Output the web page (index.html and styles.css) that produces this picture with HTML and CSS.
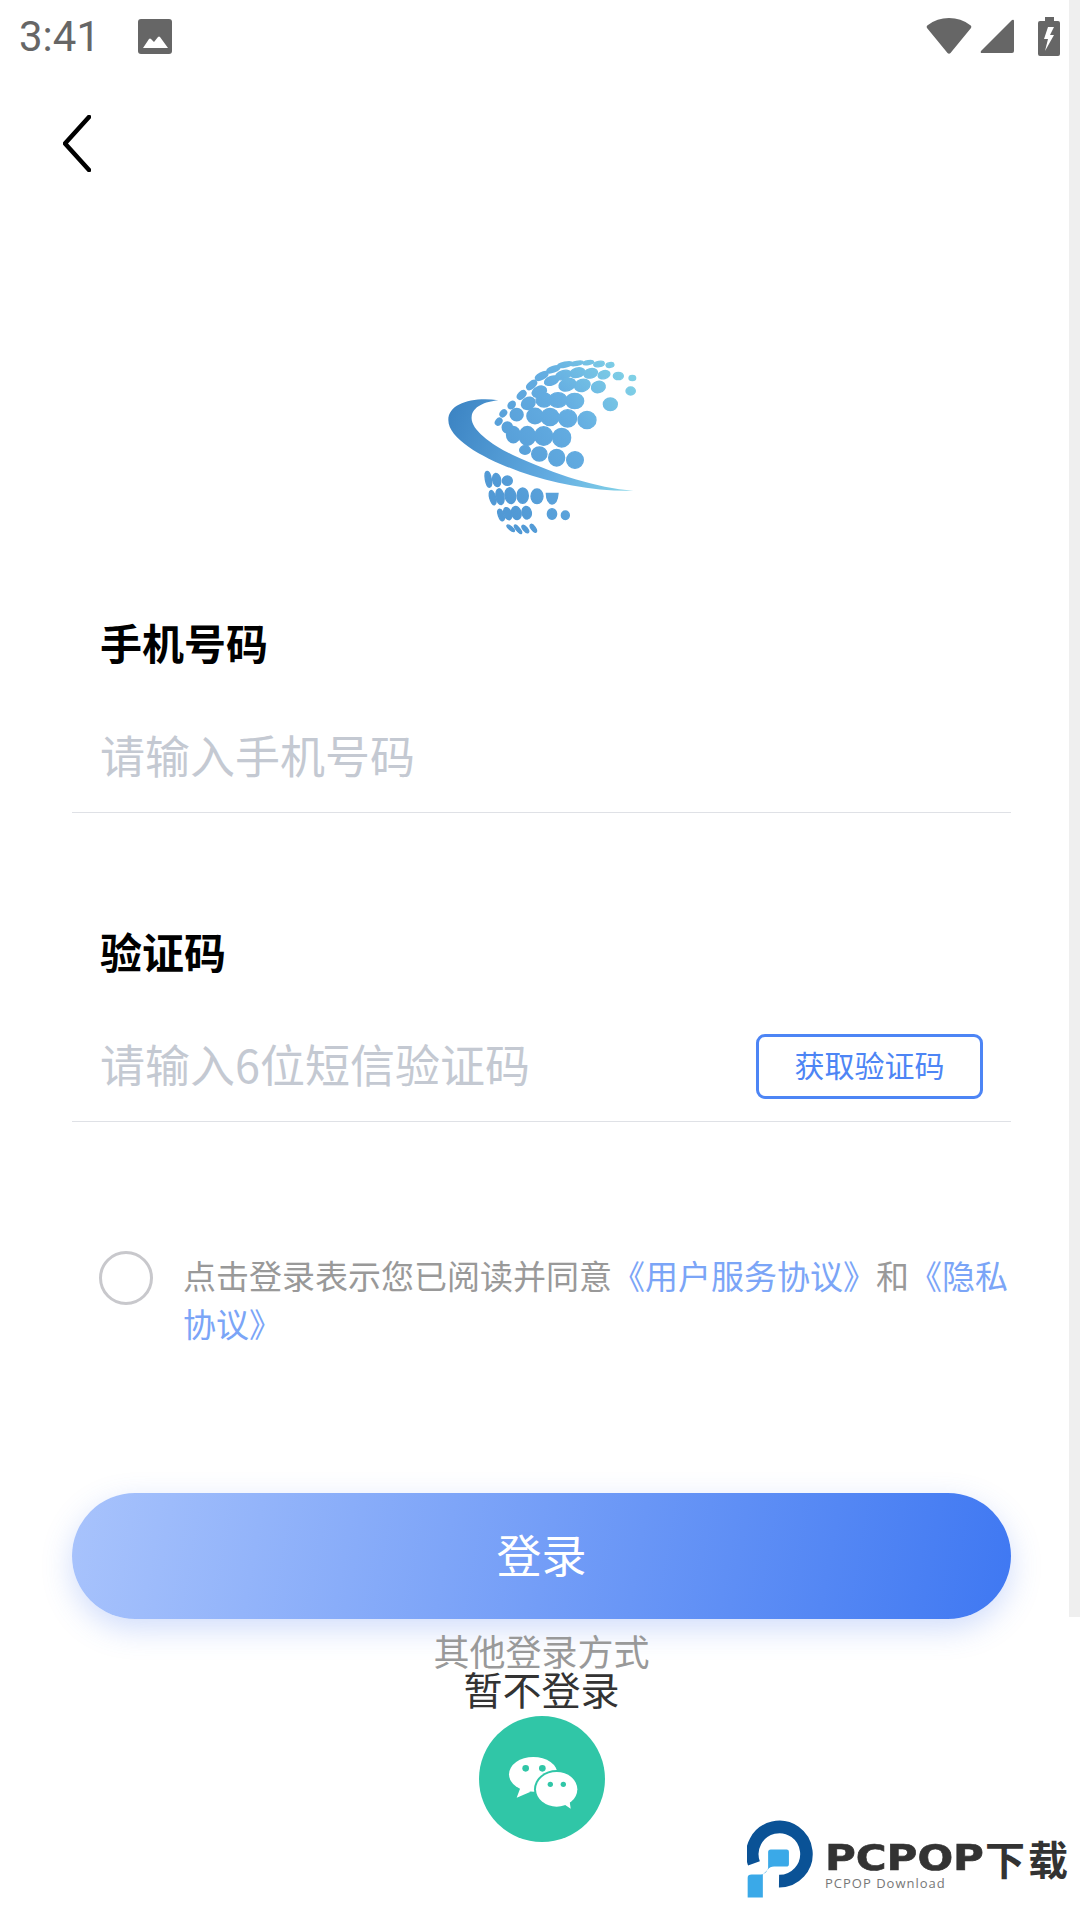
FILE: index.html
```html
<!DOCTYPE html>
<html lang="zh-CN">
  <head>
    <meta charset="UTF-8" />
    <meta name="viewport" content="width=device-width, initial-scale=1.0" />
    <title>登录</title>
    <link rel="stylesheet" href="styles.css">
  </head>
  <body>
    <div class="page">
      <header class="status-bar">
        <div class="status-left">
          <span class="time">3:41</span>
          <svg class="icon-image" viewBox="0 0 34 35">
            <rect width="34" height="35" rx="3" fill="#666" />
            <path d="M5 29 L11 20 Q12 19 13 20 L16 23 L20 18 Q21 17 22 18 L30 29 Z" fill="#fff" />
          </svg>
        </div>
        <div class="status-right">
          <svg class="icon-wifi" viewBox="0 0 46 36">
            <path d="M21.5 35 L1 10 Q0 8 2 7 Q11 0 23 0 Q35 0 44 7 Q46 8 45 10 L24.5 35 Q23 36.5 21.5 35 Z" fill="#666" />
          </svg>
          <svg class="icon-signal" viewBox="0 0 34 34">
            <path d="M32 1 Q34 0 34 2 V32 Q34 34 32 34 H2 Q0 34 1 32 Z" fill="#666" />
          </svg>
          <svg class="icon-battery" viewBox="0 0 22 39">
            <path d="M7 0 H16 V4 H20 Q22 4 22 6 V37 Q22 39 20 39 H2 Q0 39 0 37 V6 Q0 4 2 4 H7 Z" fill="#666" />
            <path d="M10 10 L6 22 H10 L7 34 L16 18 H12 L16 10 Z" fill="#fff" />
          </svg>
        </div>
      </header>

      <nav class="nav">
        <svg class="icon-back" viewBox="0 0 28 57">
          <path d="M26 2 L2 28.5 L26 55" fill="none" stroke="#000" stroke-width="4.5" stroke-linecap="round" stroke-linejoin="round" />
        </svg>
      </nav>

      <div class="logo">
        <svg viewBox="0 0 720 600" width="240" height="200">
          <defs>
            <linearGradient id="dots" gradientUnits="userSpaceOnUse" x1="200" y1="400" x2="640" y2="120">
              <stop offset="0" stop-color="#5199d5" />
              <stop offset="0.6" stop-color="#65aee2" />
              <stop offset="1" stop-color="#7fd0e6" />
            </linearGradient>
            <linearGradient id="swoosh" gradientUnits="userSpaceOnUse" x1="85" y1="240" x2="640" y2="452">
              <stop offset="0" stop-color="#3d85c4" />
              <stop offset="0.6" stop-color="#64ade2" />
              <stop offset="1" stop-color="#86d6e8" />
            </linearGradient>
          </defs>
          <!-- 左上的点更密 -->
          <g fill="url(#dots)" stroke="url(#dots)" stroke-width="9">
            <ellipse cx="435" cy="74" rx="20" ry="5" transform="rotate(-12 435 74)" />
            <ellipse cx="400" cy="88" rx="18" ry="6" transform="rotate(-20 400 88)" />
            <ellipse cx="365" cy="108" rx="18" ry="7" transform="rotate(-28 365 108)" />
            <ellipse cx="335" cy="135" rx="15" ry="7" transform="rotate(-40 335 135)" />
            <ellipse cx="305" cy="165" rx="13" ry="7" transform="rotate(-45 305 165)" />
            <ellipse cx="275" cy="195" rx="10" ry="7" transform="rotate(-50 275 195)" />
            <ellipse cx="250" cy="220" rx="9" ry="6" transform="rotate(-50 250 220)" />
            <ellipse cx="236" cy="245" rx="9" ry="6" transform="rotate(-50 236 245)" />
            <ellipse cx="395" cy="122" rx="20" ry="10" transform="rotate(-20 395 122)" />
            <ellipse cx="358" cy="155" rx="20" ry="13" transform="rotate(-25 358 155)" />
            <ellipse cx="325" cy="190" rx="19" ry="15" transform="rotate(-30 325 190)" />
            <ellipse cx="290" cy="224" rx="17" ry="16" />
            <ellipse cx="262" cy="262" rx="13" ry="14" />
            <ellipse cx="345" cy="228" rx="22" ry="21" />
            <ellipse cx="280" cy="284" rx="18" ry="22" />
            <ellipse cx="322" cy="288" rx="22" ry="26" />
          </g>
          <g fill="url(#dots)" stroke="url(#dots)" stroke-width="4">
            <ellipse cx="570" cy="75" rx="12" ry="7" transform="rotate(-10 570 75)" />
            <ellipse cx="537" cy="72" rx="16" ry="8" transform="rotate(-10 537 72)" />
            <ellipse cx="505" cy="68" rx="16" ry="6" transform="rotate(-10 505 68)" />
            <ellipse cx="470" cy="70" rx="20" ry="6" transform="rotate(-10 470 70)" />
            <ellipse cx="595" cy="108" rx="15" ry="11" />
            <ellipse cx="637" cy="114" rx="10" ry="8" />
            <ellipse cx="632" cy="153" rx="14" ry="12" />
            <ellipse cx="552" cy="104" rx="18" ry="12" transform="rotate(-15 552 104)" />
            <ellipse cx="512" cy="100" rx="21" ry="14" transform="rotate(-15 512 100)" />
            <ellipse cx="472" cy="98" rx="23" ry="14" transform="rotate(-15 472 98)" />
            <ellipse cx="430" cy="105" rx="24" ry="13" transform="rotate(-18 430 105)" />
            <ellipse cx="535" cy="141" rx="21" ry="17" transform="rotate(-15 535 141)" />
            <ellipse cx="487" cy="136" rx="24" ry="18" transform="rotate(-18 487 136)" />
            <ellipse cx="442" cy="134" rx="26" ry="18" transform="rotate(-20 442 134)" />
            <ellipse cx="571" cy="193" rx="21" ry="19" />
            <ellipse cx="464" cy="183" rx="27" ry="23" />
            <ellipse cx="414" cy="180" rx="27" ry="22" />
            <ellipse cx="372" cy="180" rx="24" ry="21" />
            <ellipse cx="501" cy="240" rx="27" ry="26" />
            <ellipse cx="443" cy="235" rx="27" ry="26" />
            <ellipse cx="390" cy="231" rx="27" ry="26" />
            <ellipse cx="425" cy="293" rx="27" ry="28" />
            <ellipse cx="371" cy="288" rx="27" ry="28" />
            <ellipse cx="465" cy="360" rx="25" ry="25" />
            <ellipse cx="410" cy="353" rx="24" ry="25" />
            <ellipse cx="358" cy="342" rx="23" ry="21" />
            <ellipse cx="315" cy="330" rx="16" ry="13" />
            <ellipse cx="205" cy="418" rx="9" ry="24" transform="rotate(-10 205 418)" />
            <ellipse cx="230" cy="420" rx="12" ry="20" transform="rotate(-10 230 420)" />
            <ellipse cx="262" cy="422" rx="15" ry="14" />
            <ellipse cx="218" cy="473" rx="9" ry="22" transform="rotate(-15 218 473)" />
            <ellipse cx="240" cy="470" rx="12" ry="24" transform="rotate(-10 240 470)" />
            <ellipse cx="271" cy="467" rx="16" ry="24" transform="rotate(-10 271 467)" />
            <ellipse cx="308" cy="467" rx="17" ry="23" />
            <ellipse cx="351" cy="469" rx="18" ry="22" />
            <path d="M379 460 H414 Q412 490 396 492 Q380 490 379 460 Z" />
            <ellipse cx="243" cy="525" rx="8" ry="18" transform="rotate(-20 243 525)" />
            <ellipse cx="263" cy="521" rx="11" ry="19" transform="rotate(-20 263 521)" />
            <ellipse cx="289" cy="519" rx="14" ry="20" transform="rotate(-15 289 519)" />
            <ellipse cx="320" cy="518" rx="14" ry="19" transform="rotate(-10 320 518)" />
            <ellipse cx="396" cy="522" rx="14" ry="16" />
            <ellipse cx="436" cy="526" rx="12" ry="13" />
            <ellipse cx="272" cy="565" rx="14" ry="5" transform="rotate(40 272 565)" />
            <ellipse cx="294" cy="568" rx="16" ry="5" transform="rotate(50 294 568)" />
            <ellipse cx="316" cy="567" rx="14" ry="6" transform="rotate(50 316 567)" />
            <ellipse cx="340" cy="565" rx="14" ry="6" transform="rotate(55 340 565)" />
          </g>
          <path d="M235 181 C160 170 85 190 85 240 C85 300 200 360 300 395 C400 430 530 455 640 452 C530 445 400 400 300 355 C220 320 150 270 155 230 C158 200 195 185 235 181 Z" fill="#fff" stroke="#fff" stroke-width="12" />
          <path d="M235 181 C160 170 85 190 85 240 C85 300 200 360 300 395 C400 430 530 455 640 452 C530 445 400 400 300 355 C220 320 150 270 155 230 C158 200 195 185 235 181 Z" fill="url(#swoosh)" />
        </svg>
      </div>

      <main class="form">
        <section class="field">
          <h2 class="field-label">手机号码</h2>
          <div class="field-row">
            <span class="placeholder">请输入手机号码</span>
          </div>
        </section>

        <section class="field field-code">
          <h2 class="field-label">验证码</h2>
          <div class="field-row">
            <span class="placeholder">请输入6位短信验证码</span>
            <button class="code-btn">获取验证码</button>
          </div>
        </section>

        <div class="agreement">
          <span class="check"></span>
          <p class="agreement-text"><span>点击登录表示您已阅读并同意</span><span class="link">《用户服务协议》</span><span>和</span><span class="link">《隐私</span><span class="link">协议》</span></p>
        </div>

        <button class="login-btn">登录</button>
      </main>

      <div class="other">
        <p class="other-title">其他登录方式</p>
        <p class="skip">暂不登录</p>
        <svg class="wechat" viewBox="237 347 378 378">
          <circle cx="426" cy="536" r="189" fill="#30c6a7" />
          <ellipse cx="400" cy="522" rx="73" ry="52" fill="#fff" />
          <path d="M362 560 L350 592 L392 574 Z" fill="#fff" />
          <ellipse cx="470" cy="567" rx="68" ry="58" fill="#30c6a7" />
          <ellipse cx="470" cy="567" rx="62" ry="52" fill="#fff" />
          <path d="M490 610 L512 625 L508 596 Z" fill="#fff" />
          <circle cx="377" cy="504" r="10" fill="#30c6a7" />
          <circle cx="427" cy="504" r="10" fill="#30c6a7" />
          <circle cx="451" cy="552" r="8" fill="#30c6a7" />
          <circle cx="490" cy="552" r="8" fill="#30c6a7" />
        </svg>
      </div>

      <!-- 滚动条 -->
      <div class="scrollbar"></div>

      <!-- 水印 -->
      <div class="watermark">
        <svg class="watermark-logo" viewBox="78 88 206 234">
          <path d="M99 218 A82 82 0 1 1 175 272" fill="none" stroke="#0a5296" stroke-width="38" />
          <path d="M150 176 H198 Q205 176 205 183 V220 Q205 228 197 228 H160 Q148 228 140 238 L126 252 V322 H80 V262 Q80 252 92 252 H120 Q138 250 142 232 V184 Q142 176 150 176 Z" fill="#3aa9e8" />
        </svg>
        <div class="watermark-text">
          <div class="watermark-name"><span class="watermark-en">PCPOP</span><span class="watermark-cn">下载</span></div>
          <div class="watermark-sub">PCPOP Download</div>
        </div>
      </div>
    </div>
  </body>
</html>
```

FILE: styles.css
```css
* {
  box-sizing: border-box;
}

body {
  margin: 0;
  background: #fff;
  font-family: "Noto Sans CJK SC", "Noto Sans", sans-serif;
}

p,
h2 {
  margin: 0;
}

.page {
  position: relative;
  width: 1080px;
  height: 1920px;
  overflow: hidden;
}

.status-bar {
  display: flex;
  justify-content: space-between;
  align-items: center;
  height: 72px;
  padding: 0 20px 0 19px;
}

.status-left,
.status-right {
  display: flex;
  align-items: center;
}

.time {
  width: 119px;
  font-family: Roboto, sans-serif;
  font-size: 42px;
  color: #666;
}

.icon-image {
  width: 34px;
  height: 35px;
}

.icon-wifi {
  width: 46px;
  height: 36px;
  margin-right: 8px;
}

.icon-signal {
  width: 34px;
  height: 34px;
  margin-right: 24px;
}

.icon-battery {
  width: 22px;
  height: 39px;
}

.nav {
  padding: 43px 0 0 63px;
}

.icon-back {
  display: block;
  width: 28px;
  height: 57px;
}

.logo {
  display: flex;
  justify-content: center;
  margin-top: 168px;
}

.logo svg {
  display: block;
  filter: blur(0.4px);
}

.form {
  padding: 0 69px 0 72px;
}

.field {
  margin-top: 72px;
}

.field-code {
  margin-top: 108px;
}

.field-label {
  padding-left: 28px;
  font-size: 42px;
  line-height: 60px;
  font-weight: 700;
  color: #000;
}

.field-row {
  display: flex;
  justify-content: space-between;
  align-items: center;
  height: 111px;
  margin-top: 30px;
  padding: 0 28px;
  border-bottom: 1px solid #dfe1e6;
}

.placeholder {
  margin-bottom: 5px;
  font-size: 45px;
  color: #c4c9d2;
}

.code-btn {
  width: 227px;
  height: 65px;
  padding: 0 0 5px;
  background: #fff;
  border: 3px solid #4d85f5;
  border-radius: 9px;
  font-family: inherit;
  font-size: 30px;
  color: #4d85f5;
}

.agreement {
  display: flex;
  gap: 30px;
  margin-top: 129px;
  padding-left: 27px;
}

.check {
  flex: none;
  width: 54px;
  height: 54px;
  border: 3px solid #c8c8cc;
  border-radius: 50%;
}

.agreement-text {
  width: 830px;
  font-size: 33px;
  line-height: 48px;
  color: #999;
}

.link {
  color: #7ba5f7;
}

.login-btn {
  display: block;
  width: 100%;
  height: 126px;
  margin-top: 146px;
  padding: 0 0 5px;
  background: linear-gradient(100deg, #a8c3fc, #3f78f2);
  border: none;
  border-radius: 63px;
  box-shadow: 0 10px 30px rgba(70, 120, 240, 0.25);
  font-family: inherit;
  font-size: 45px;
  color: #fff;
}

.other {
  display: flex;
  flex-direction: column;
  align-items: center;
  padding: 13px 0 0 3px;
}

.other-title {
  font-size: 36px;
  line-height: 37px;
  color: #999;
}

.skip {
  font-size: 39px;
  line-height: 38px;
  color: #333;
}

.wechat {
  width: 126px;
  height: 126px;
  margin-top: 9px;
}

.scrollbar {
  position: absolute;
  top: 0;
  right: 0;
  width: 11px;
  height: 1617px;
  background: #efefef;
}

.watermark {
  position: absolute;
  top: 1820px;
  left: 747px;
  display: flex;
  gap: 10px;
}

.watermark-logo {
  width: 68px;
  height: 78px;
}

.watermark-text {
  display: flex;
  flex-direction: column;
}

.watermark-name {
  display: flex;
  align-items: center;
  height: 55px;
  padding-top: 20px;
  color: #333;
}

.watermark-en {
  width: 160px;
  font-family: "DejaVu Sans", sans-serif;
  font-size: 35px;
  font-weight: 700;
  transform: scaleX(1.2);
  transform-origin: left center;
  -webkit-text-stroke: 0.6px #333;
}

.watermark-cn {
  font-size: 40px;
  font-weight: 700;
  letter-spacing: 3px;
  white-space: nowrap;
}

.watermark-sub {
  font-family: "Open Sans", sans-serif;
  font-size: 13px;
  line-height: 16px;
  letter-spacing: 1px;
  color: #777;
}
```
